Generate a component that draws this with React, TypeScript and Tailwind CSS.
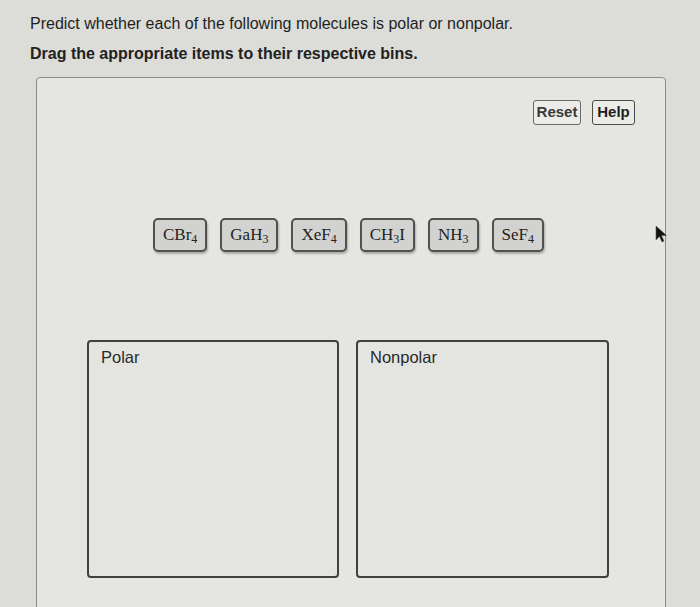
const molecules: { base: string; sub: string; tail?: string }[] = [
  { base: "CBr", sub: "4" },
  { base: "GaH", sub: "3" },
  { base: "XeF", sub: "4" },
  { base: "CH", sub: "3", tail: "I" },
  { base: "NH", sub: "3" },
  { base: "SeF", sub: "4" },
];

function Chip({ base, sub, tail }: { base: string; sub: string; tail?: string }) {
  return (
    <div className="h-[34px] px-[8px] flex items-center rounded-[5px] border-2 border-[#505250] bg-[#d2d3d0] shadow-[1px_2px_2px_rgba(0,0,0,0.25)] text-[17px] text-[#222] font-['Liberation_Serif',serif]">
      {base}
      <span className="text-[12px] relative top-[4px]">{sub}</span>
      {tail}
    </div>
  );
}

function Bin({ label }: { label: string }) {
  return (
    <div className="h-[238px] rounded-[4px] border-2 border-[#3f4140] bg-[#e4e5e1] px-[12px] pt-[3px]">
      <span className="text-[16.5px] text-[#2a2a2a]">{label}</span>
    </div>
  );
}

export default function App() {
  return (
    <div className="relative w-[700px] h-[607px] overflow-hidden bg-[#dcdcd8] font-['Liberation_Sans',Arial,sans-serif] pt-[14px]">
      <p className="pl-[30px] text-[16px] leading-[20px] text-[#1f1f1f]">
        Predict whether each of the following molecules is polar or nonpolar.
      </p>
      <p className="pl-[30px] mt-[10px] text-[16px] leading-[20px] font-bold text-[#222]">
        Drag the appropriate items to their respective bins.
      </p>

      <div className="ml-[36px] mt-[13px] w-[630px] h-[540px] rounded-t-[4px] border border-[#8a8b88] bg-[#e5e6e2]">
        <div className="flex justify-end gap-[11px] pr-[30px] pt-[22px]">
          <button className="h-[25px] w-[48px] rounded-[3px] border-[1.5px] border-[#6a6b69] bg-[#ebebe8] text-[15px] font-bold text-[#3a3a3a]">
            Reset
          </button>
          <button className="h-[25px] w-[43px] rounded-[3px] border-[1.5px] border-[#4a4b49] bg-[#ebebe8] text-[15px] font-bold text-[#1f1f1f]">
            Help
          </button>
        </div>

        <div className="flex justify-center gap-[13px] mt-[93px] pr-[5px]">
          {molecules.map((m) => (
            <Chip key={m.base + m.sub} {...m} />
          ))}
        </div>

        <div className="grid grid-cols-[252px_253px] gap-[17px] justify-center mt-[88px] pr-[6px]">
          <Bin label="Polar" />
          <Bin label="Nonpolar" />
        </div>
      </div>

      <svg className="absolute left-[655px] top-[225px]" width="13" height="18" viewBox="0 0 13 18">
        <path d="M1 1 L1 15 L4.5 11.5 L7 17 L9 16 L6.5 10.5 L11.5 10.5 Z" fill="#111" stroke="#555" strokeWidth="0.6" />
      </svg>
    </div>
  );
}
